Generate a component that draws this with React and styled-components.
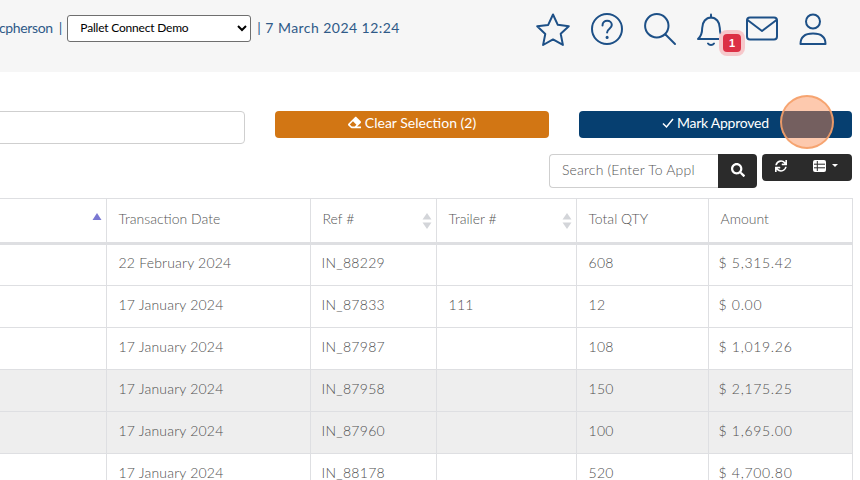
import React from 'react';
import styled, { createGlobalStyle } from 'styled-components';
import { FaEraser, FaSearch, FaSync } from 'react-icons/fa';

const Global = createGlobalStyle`
  html, body { margin: 0; padding: 0; background: #fff; }
  body { width: 860px; height: 480px; overflow: hidden; font-family: "Lato", "Liberation Sans", sans-serif; }
  * { box-sizing: border-box; }
`;
const Page = styled.div`position: relative; width: 860px; height: 480px; overflow: hidden;`;
const Header = styled.header`
  height: 72px; background: #f6f6f6; display: flex; align-items: flex-start;
  justify-content: space-between; padding: 15px 0 0 0;
`;
const Info = styled.div`
  display: flex; align-items: center; height: 27px; margin-left: -1px; color: #2f5a88; padding-bottom: 3px;
  font-size: 14px; white-space: nowrap;
`;
const UserName = styled.span`letter-spacing: -0.35px;`;
const Sep = styled.span`margin: 0 5px 0 6px; color: #2f5a88;`;
const CompanySelect = styled.select`
  width: 184px; height: 27px; margin-bottom: -3px; font-family: inherit; font-size: 12px; color: #000; background: #fff;
  border: 1px solid #6f6f6f; border-radius: 3px; padding: 0 0 3px 8px; letter-spacing: -0.2px;
`;
const DateText = styled.span`margin-left: 6px; letter-spacing: 0.45px;`;
const Icons = styled.nav`display: flex; align-items: flex-start; margin: -2px 33px 0 0;`;
const IconBox = styled.div`
  position: relative; width: ${p => p.$w}px; height: 34px; margin-left: ${p => p.$gap}px;
  svg { display: block; width: 100%; height: 100%; overflow: visible; fill: none; stroke: #1d5087; stroke-width: 2; stroke-linecap: round; stroke-linejoin: round; }
`;
const Badge = styled.span`
  position: absolute; left: 26px; top: 21px; width: 18px; height: 18px; border-radius: 4px; background: #dc3045;
  box-shadow: 0 0 0 4px #f6c8cb; color: #fff; font: 700 11px/18px "Liberation Sans", sans-serif; text-align: center;
`;
const Actions = styled.div`display: flex; margin-top: 39px; height: 33px; padding-right: 8px; align-items: flex-start;`;
const FilterInput = styled.div`
  width: 250px; height: 33px; margin-left: -5px; background: #fff; border: 1px solid #cfcfcf; border-radius: 4px;
`;
const ActionButton = styled.button`
  height: 27px; border: 0; border-radius: 4px; color: #fff; background: ${p => p.$bg};
  width: ${p => p.$w}px; margin-left: ${p => p.$gap}px; font-family: inherit; font-size: 14px; letter-spacing: ${p => p.$ls}px;
  display: flex; align-items: center; justify-content: ${p => p.$start ? 'flex-start' : 'center'}; gap: ${p => p.$start ? 3 : 4}px;
  padding: 0 0 4px ${p => p.$start || 0}px;
  svg { flex: none; }
`;
const Tools = styled.div`display: flex; justify-content: flex-end; margin-top: 10px; padding-right: 8px; height: 44px;`;
const SearchInput = styled.div`
  width: 169px; height: 34px; border: 1px solid #cfcfcf; border-right: 0; border-radius: 4px 0 0 4px; background: #fff;
  color: #555; font-size: 14px; font-weight: 300; letter-spacing: 0.2px; line-height: 30px; padding-left: 12px; overflow: hidden; white-space: nowrap;
`;
const SearchButton = styled.div`
  width: 39px; height: 34px; background: #2b2b2b; border-radius: 0 4px 4px 0; color: #fff; padding-bottom: 2px;
  display: flex; align-items: center; justify-content: center;
`;
const ToolGroup = styled.div`
  width: 90px; height: 27px; margin-left: 5px; background: #2b2b2b; border-radius: 4px; color: #fff;
  display: flex; align-items: center; padding: 0 0 4px 13px;
`;
const ListIcon = styled.svg`width: 13px; height: 12px; margin-left: 26px; flex: none;`;
const Caret = styled.span`
  width: 0; height: 0; margin-left: 6px; border: 3.5px solid transparent; border-top-color: #fff; border-bottom: 0;
`;
const Table = styled.table`
  width: 852px; table-layout: fixed; border-collapse: collapse; color: #505050; font-size: 14px; font-weight: 300;
`;
const Th = styled.th`
  position: relative; height: 45px; padding: 0 0 4px 12px; text-align: left; font-weight: 300; color: #555; letter-spacing: 0;
  border: 1px solid #dedfe2; border-bottom: 3px solid #dedfe2; &:first-child { border-left: 0; }
`;
const Td = styled.td`
  height: 42px; padding: 0 0 5px ${p => p.$pad}px; border: 1px solid #dedfe2; &:first-child { border-left: 0; }
  letter-spacing: ${p => p.$ls}px; background: ${p => p.$shade ? '#eeeeee' : '#fff'};
`;
const SortArrows = styled.svg`position: absolute; right: 4px; top: 14px; width: 10px; height: 16px;`;
const Pointer = styled.div`
  position: absolute; left: 780px; top: 95px; width: 54px; height: 54px; border-radius: 50%;
  background: rgba(250, 135, 75, 0.45); border: 2px solid rgba(245, 160, 105, 0.9);
`;

const rows = [
  ['22 February 2024', 'IN_88229', '', '608', '$ 5,315.42', false],
  ['17 January 2024', 'IN_87833', '111', '12', '$ 0.00', false],
  ['17 January 2024', 'IN_87987', '', '108', '$ 1,019.26', false],
  ['17 January 2024', 'IN_87958', '', '150', '$ 2,175.25', true],
  ['17 January 2024', 'IN_87960', '', '100', '$ 1,695.00', true],
  ['17 January 2024', 'IN_88178', '', '520', '$ 4,700.80', false],
];
const cols = [{ ls: 0.2, pad: 12 }, { ls: 0.3, pad: 11 }, { ls: 0.3, pad: 12 }, { ls: 0.3, pad: 12 }, { ls: 0.7, pad: 10 }];

const Both = () => (
  <SortArrows viewBox="0 0 10 16">
    <path d="M5 0L9.5 6.5H.5Z" fill="#d3d5d9" /><path d="M5 16L9.5 9.5H.5Z" fill="#d3d5d9" />
  </SortArrows>
);

export default function App() {
  return (
    <Page>
      <Global />
      <Header>
        <Info>
          <UserName>cpherson</UserName><Sep>|</Sep>
          <CompanySelect defaultValue="p"><option value="p">Pallet Connect Demo</option></CompanySelect>
          <DateText>| 7 March 2024 12:24</DateText>
        </Info>
        <Icons>
          <IconBox $w={34} $gap={0}><svg viewBox="0 0 34 34"><path d="M17 1.5l4.8 10.3 11 1.4-8.100 7.600 2.200 11.100L17 26.400 7.100 32l2.200-11.100-8.100-7.600 11-1.400z" /></svg></IconBox>
          <IconBox $w={32} $gap={21}><svg viewBox="0 0 32 34"><circle cx="16" cy="16" r="15" /><path d="M11.500 12.500c0-3 2.200-4.700 4.700-4.700s4.600 1.700 4.600 4.300c0 3.600-4.700 3.600-4.700 7.400" /><path d="M16.100 24.300v.3" strokeWidth="3" /></svg></IconBox>
          <IconBox $w={32} $gap={21}><svg viewBox="0 0 32 34"><circle cx="12.800" cy="12.800" r="11.700" /><path d="M21.500 21.500L31 31" /></svg></IconBox>
          <IconBox $w={28} $gap={21}>
            <svg viewBox="0 0 28 34"><path d="M1 26c3.500-3 4.200-6.500 4.200-11 0-6 3.800-10.500 8.800-10.500s8.800 4.500 8.800 10.500c0 4.500.7 8 4.200 11z" /><path d="M14 1.500v3" /><path d="M11 30.500c1.500 2 4.500 2 6 0" /></svg>
            <Badge>1</Badge>
          </IconBox>
          <IconBox $w={32} $gap={21}><svg viewBox="0 0 32 34"><rect x="1" y="4.500" width="30" height="22" rx="3" /><path d="M1.500 7l14.500 11L30.500 7" /></svg></IconBox>
          <IconBox $w={28} $gap={21}><svg viewBox="0 0 28 34"><circle cx="14" cy="8.500" r="7" /><path d="M1.500 31c0-7 4.500-10.500 12.500-10.500S26.500 24 26.500 31z" /></svg></IconBox>
        </Icons>
      </Header>
      <Actions>
        <FilterInput />
        <ActionButton $bg="#d27614" $w={274} $gap={30} $ls={0}><FaEraser size={13} />Clear Selection (2)</ActionButton>
        <ActionButton $bg="#063f70" $w={273} $gap={30} $start={83} $ls={-0.25}>
          <svg width="12" height="12" viewBox="0 0 12 12" fill="none" stroke="#fff" strokeWidth="1.500"><path d="M1 6.500L4.500 10 11 2" /></svg>
          Mark Approved
        </ActionButton>
      </Actions>
      <Tools>
        <SearchInput>Search (Enter To Appl</SearchInput>
        <SearchButton><FaSearch size={14} /></SearchButton>
        <ToolGroup>
          <FaSync size={12} />
          <ListIcon viewBox="0 0 13 12">
            <rect width="13" height="12" rx="2" fill="#fff" />
            <path d="M1 4.200H12M1 7.800H12M4.300 1V11" stroke="#2b2b2b" strokeWidth="1" />
          </ListIcon>
          <Caret />
        </ToolGroup>
      </Tools>
      <Table>
        <colgroup><col width="106" /><col width="204" /><col width="126" /><col width="140" /><col width="132" /><col width="144" /></colgroup>
        <thead>
          <tr>
            <Th><SortArrows viewBox="0 0 10 16"><path d="M5 0L9.500 7H.5Z" fill="#7a78d2" /></SortArrows></Th>
            <Th>Transaction Date</Th>
            <Th>Ref #<Both /></Th>
            <Th>Trailer #<Both /></Th>
            <Th>Total QTY</Th>
            <Th>Amount</Th>
          </tr>
        </thead>
        <tbody>
          {rows.map((r, i) => (
            <tr key={i}>
              <Td $shade={r[5]} $pad={12} $ls={0} />
              {r.slice(0, 5).map((c, j) => <Td key={j} $shade={r[5]} $pad={cols[j].pad} $ls={cols[j].ls}>{c}</Td>)}
            </tr>
          ))}
        </tbody>
      </Table>
      <Pointer />
    </Page>
  );
}
